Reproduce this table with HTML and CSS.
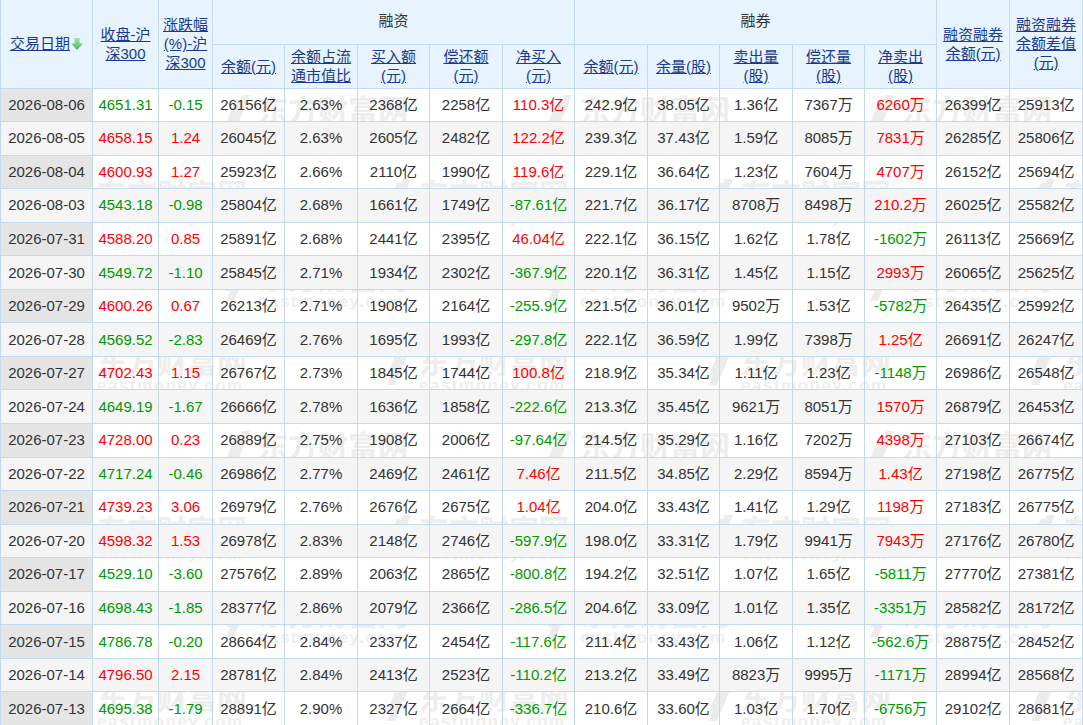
FILE: index.html
```html
<!DOCTYPE html>
<html lang="zh-CN">
<head>
<meta charset="utf-8">
<title>融资融券</title>
<link rel="stylesheet" href="styles.css">
</head>
<body>
<div class="wrap">
  <div class="wm" aria-hidden="true">
    <div class="wm-row a">
      <div class="wm-tile"><svg class="wm-logo" viewBox="0 0 30 44"><path d="M20 2 L28 2 L12 40 L4 40 Z M14 6 L19 6 L9 30 L4 30 Z"/></svg><div class="wm-txt"><span class="wm-cn">东方财富网</span><span class="wm-en">eastmoney.com</span></div></div>
      <div class="wm-tile"><svg class="wm-logo" viewBox="0 0 30 44"><path d="M20 2 L28 2 L12 40 L4 40 Z M14 6 L19 6 L9 30 L4 30 Z"/></svg><div class="wm-txt"><span class="wm-cn">东方财富网</span><span class="wm-en">eastmoney.com</span></div></div>
      <div class="wm-tile"><svg class="wm-logo" viewBox="0 0 30 44"><path d="M20 2 L28 2 L12 40 L4 40 Z M14 6 L19 6 L9 30 L4 30 Z"/></svg><div class="wm-txt"><span class="wm-cn">东方财富网</span><span class="wm-en">eastmoney.com</span></div></div>
      <div class="wm-tile"><svg class="wm-logo" viewBox="0 0 30 44"><path d="M20 2 L28 2 L12 40 L4 40 Z M14 6 L19 6 L9 30 L4 30 Z"/></svg><div class="wm-txt"><span class="wm-cn">东方财富网</span><span class="wm-en">eastmoney.com</span></div></div>
    </div>
    <div class="wm-row b">
      <div class="wm-tile"><svg class="wm-logo" viewBox="0 0 30 44"><path d="M20 2 L28 2 L12 40 L4 40 Z M14 6 L19 6 L9 30 L4 30 Z"/></svg><div class="wm-txt"><span class="wm-cn">东方财富网</span><span class="wm-en">eastmoney.com</span></div></div>
      <div class="wm-tile"><svg class="wm-logo" viewBox="0 0 30 44"><path d="M20 2 L28 2 L12 40 L4 40 Z M14 6 L19 6 L9 30 L4 30 Z"/></svg><div class="wm-txt"><span class="wm-cn">东方财富网</span><span class="wm-en">eastmoney.com</span></div></div>
      <div class="wm-tile"><svg class="wm-logo" viewBox="0 0 30 44"><path d="M20 2 L28 2 L12 40 L4 40 Z M14 6 L19 6 L9 30 L4 30 Z"/></svg><div class="wm-txt"><span class="wm-cn">东方财富网</span><span class="wm-en">eastmoney.com</span></div></div>
      <div class="wm-tile"><svg class="wm-logo" viewBox="0 0 30 44"><path d="M20 2 L28 2 L12 40 L4 40 Z M14 6 L19 6 L9 30 L4 30 Z"/></svg><div class="wm-txt"><span class="wm-cn">东方财富网</span><span class="wm-en">eastmoney.com</span></div></div>
    </div>
    <div class="wm-row a">
      <div class="wm-tile"><svg class="wm-logo" viewBox="0 0 30 44"><path d="M20 2 L28 2 L12 40 L4 40 Z M14 6 L19 6 L9 30 L4 30 Z"/></svg><div class="wm-txt"><span class="wm-cn">东方财富网</span><span class="wm-en">eastmoney.com</span></div></div>
      <div class="wm-tile"><svg class="wm-logo" viewBox="0 0 30 44"><path d="M20 2 L28 2 L12 40 L4 40 Z M14 6 L19 6 L9 30 L4 30 Z"/></svg><div class="wm-txt"><span class="wm-cn">东方财富网</span><span class="wm-en">eastmoney.com</span></div></div>
      <div class="wm-tile"><svg class="wm-logo" viewBox="0 0 30 44"><path d="M20 2 L28 2 L12 40 L4 40 Z M14 6 L19 6 L9 30 L4 30 Z"/></svg><div class="wm-txt"><span class="wm-cn">东方财富网</span><span class="wm-en">eastmoney.com</span></div></div>
      <div class="wm-tile"><svg class="wm-logo" viewBox="0 0 30 44"><path d="M20 2 L28 2 L12 40 L4 40 Z M14 6 L19 6 L9 30 L4 30 Z"/></svg><div class="wm-txt"><span class="wm-cn">东方财富网</span><span class="wm-en">eastmoney.com</span></div></div>
    </div>
    <div class="wm-row b">
      <div class="wm-tile"><svg class="wm-logo" viewBox="0 0 30 44"><path d="M20 2 L28 2 L12 40 L4 40 Z M14 6 L19 6 L9 30 L4 30 Z"/></svg><div class="wm-txt"><span class="wm-cn">东方财富网</span><span class="wm-en">eastmoney.com</span></div></div>
      <div class="wm-tile"><svg class="wm-logo" viewBox="0 0 30 44"><path d="M20 2 L28 2 L12 40 L4 40 Z M14 6 L19 6 L9 30 L4 30 Z"/></svg><div class="wm-txt"><span class="wm-cn">东方财富网</span><span class="wm-en">eastmoney.com</span></div></div>
      <div class="wm-tile"><svg class="wm-logo" viewBox="0 0 30 44"><path d="M20 2 L28 2 L12 40 L4 40 Z M14 6 L19 6 L9 30 L4 30 Z"/></svg><div class="wm-txt"><span class="wm-cn">东方财富网</span><span class="wm-en">eastmoney.com</span></div></div>
      <div class="wm-tile"><svg class="wm-logo" viewBox="0 0 30 44"><path d="M20 2 L28 2 L12 40 L4 40 Z M14 6 L19 6 L9 30 L4 30 Z"/></svg><div class="wm-txt"><span class="wm-cn">东方财富网</span><span class="wm-en">eastmoney.com</span></div></div>
    </div>
    <div class="wm-row a">
      <div class="wm-tile"><svg class="wm-logo" viewBox="0 0 30 44"><path d="M20 2 L28 2 L12 40 L4 40 Z M14 6 L19 6 L9 30 L4 30 Z"/></svg><div class="wm-txt"><span class="wm-cn">东方财富网</span><span class="wm-en">eastmoney.com</span></div></div>
      <div class="wm-tile"><svg class="wm-logo" viewBox="0 0 30 44"><path d="M20 2 L28 2 L12 40 L4 40 Z M14 6 L19 6 L9 30 L4 30 Z"/></svg><div class="wm-txt"><span class="wm-cn">东方财富网</span><span class="wm-en">eastmoney.com</span></div></div>
      <div class="wm-tile"><svg class="wm-logo" viewBox="0 0 30 44"><path d="M20 2 L28 2 L12 40 L4 40 Z M14 6 L19 6 L9 30 L4 30 Z"/></svg><div class="wm-txt"><span class="wm-cn">东方财富网</span><span class="wm-en">eastmoney.com</span></div></div>
      <div class="wm-tile"><svg class="wm-logo" viewBox="0 0 30 44"><path d="M20 2 L28 2 L12 40 L4 40 Z M14 6 L19 6 L9 30 L4 30 Z"/></svg><div class="wm-txt"><span class="wm-cn">东方财富网</span><span class="wm-en">eastmoney.com</span></div></div>
    </div>
    <div class="wm-row b">
      <div class="wm-tile"><svg class="wm-logo" viewBox="0 0 30 44"><path d="M20 2 L28 2 L12 40 L4 40 Z M14 6 L19 6 L9 30 L4 30 Z"/></svg><div class="wm-txt"><span class="wm-cn">东方财富网</span><span class="wm-en">eastmoney.com</span></div></div>
      <div class="wm-tile"><svg class="wm-logo" viewBox="0 0 30 44"><path d="M20 2 L28 2 L12 40 L4 40 Z M14 6 L19 6 L9 30 L4 30 Z"/></svg><div class="wm-txt"><span class="wm-cn">东方财富网</span><span class="wm-en">eastmoney.com</span></div></div>
      <div class="wm-tile"><svg class="wm-logo" viewBox="0 0 30 44"><path d="M20 2 L28 2 L12 40 L4 40 Z M14 6 L19 6 L9 30 L4 30 Z"/></svg><div class="wm-txt"><span class="wm-cn">东方财富网</span><span class="wm-en">eastmoney.com</span></div></div>
      <div class="wm-tile"><svg class="wm-logo" viewBox="0 0 30 44"><path d="M20 2 L28 2 L12 40 L4 40 Z M14 6 L19 6 L9 30 L4 30 Z"/></svg><div class="wm-txt"><span class="wm-cn">东方财富网</span><span class="wm-en">eastmoney.com</span></div></div>
    </div>
    <div class="wm-row a">
      <div class="wm-tile"><svg class="wm-logo" viewBox="0 0 30 44"><path d="M20 2 L28 2 L12 40 L4 40 Z M14 6 L19 6 L9 30 L4 30 Z"/></svg><div class="wm-txt"><span class="wm-cn">东方财富网</span><span class="wm-en">eastmoney.com</span></div></div>
      <div class="wm-tile"><svg class="wm-logo" viewBox="0 0 30 44"><path d="M20 2 L28 2 L12 40 L4 40 Z M14 6 L19 6 L9 30 L4 30 Z"/></svg><div class="wm-txt"><span class="wm-cn">东方财富网</span><span class="wm-en">eastmoney.com</span></div></div>
      <div class="wm-tile"><svg class="wm-logo" viewBox="0 0 30 44"><path d="M20 2 L28 2 L12 40 L4 40 Z M14 6 L19 6 L9 30 L4 30 Z"/></svg><div class="wm-txt"><span class="wm-cn">东方财富网</span><span class="wm-en">eastmoney.com</span></div></div>
      <div class="wm-tile"><svg class="wm-logo" viewBox="0 0 30 44"><path d="M20 2 L28 2 L12 40 L4 40 Z M14 6 L19 6 L9 30 L4 30 Z"/></svg><div class="wm-txt"><span class="wm-cn">东方财富网</span><span class="wm-en">eastmoney.com</span></div></div>
    </div>
    <div class="wm-row b">
      <div class="wm-tile"><svg class="wm-logo" viewBox="0 0 30 44"><path d="M20 2 L28 2 L12 40 L4 40 Z M14 6 L19 6 L9 30 L4 30 Z"/></svg><div class="wm-txt"><span class="wm-cn">东方财富网</span><span class="wm-en">eastmoney.com</span></div></div>
      <div class="wm-tile"><svg class="wm-logo" viewBox="0 0 30 44"><path d="M20 2 L28 2 L12 40 L4 40 Z M14 6 L19 6 L9 30 L4 30 Z"/></svg><div class="wm-txt"><span class="wm-cn">东方财富网</span><span class="wm-en">eastmoney.com</span></div></div>
      <div class="wm-tile"><svg class="wm-logo" viewBox="0 0 30 44"><path d="M20 2 L28 2 L12 40 L4 40 Z M14 6 L19 6 L9 30 L4 30 Z"/></svg><div class="wm-txt"><span class="wm-cn">东方财富网</span><span class="wm-en">eastmoney.com</span></div></div>
      <div class="wm-tile"><svg class="wm-logo" viewBox="0 0 30 44"><path d="M20 2 L28 2 L12 40 L4 40 Z M14 6 L19 6 L9 30 L4 30 Z"/></svg><div class="wm-txt"><span class="wm-cn">东方财富网</span><span class="wm-en">eastmoney.com</span></div></div>
    </div>
  </div>

  <table class="grid">
    <colgroup>
      <col class="c-date"><col class="c-close"><col class="c-chg">
      <col class="c-72"><col class="c-73"><col class="c-72"><col class="c-73"><col class="c-72">
      <col class="c-73"><col class="c-72"><col class="c-73"><col class="c-72"><col class="c-72">
      <col class="c-73"><col class="c-73">
    </colgroup>
    <thead>
      <tr class="h1">
        <th rowspan="2"><a href="#">交易日期</a><svg class="sort" viewBox="0 0 12 12" width="12" height="12"><defs><linearGradient id="ag" x1="0" y1="0" x2="0" y2="1"><stop offset="0" stop-color="#a6e0a6"/><stop offset="1" stop-color="#4db84d"/></linearGradient></defs><path d="M3.5 0h5v5.5H12L6 12 0 5.5h3.5z" fill="url(#ag)"/></svg></th>
        <th rowspan="2"><a href="#">收盘-沪深300</a></th>
        <th rowspan="2"><a href="#">涨跌幅(%)-沪深300</a></th>
        <th colspan="5" class="grp">融资</th>
        <th colspan="5" class="grp">融券</th>
        <th rowspan="2"><a href="#">融资融券余额(元)</a></th>
        <th rowspan="2"><a href="#">融资融券余额差值(元)</a></th>
      </tr>
      <tr class="h2">
        <th><a href="#">余额(元)</a></th>
        <th><a href="#">余额占流通市值比</a></th>
        <th><a href="#">买入额(元)</a></th>
        <th><a href="#">偿还额(元)</a></th>
        <th><a href="#">净买入(元)</a></th>
        <th><a href="#">余额(元)</a></th>
        <th><a href="#">余量(股)</a></th>
        <th><a href="#">卖出量(股)</a></th>
        <th><a href="#">偿还量(股)</a></th>
        <th><a href="#">净卖出(股)</a></th>
      </tr>
    </thead>
    <tbody>
      <tr><td class="d">2026-08-06</td><td class="g">4651.31</td><td class="g">-0.15</td><td>26156亿</td><td>2.63%</td><td>2368亿</td><td>2258亿</td><td class="r">110.3亿</td><td>242.9亿</td><td>38.05亿</td><td>1.36亿</td><td>7367万</td><td class="r">6260万</td><td>26399亿</td><td>25913亿</td></tr>
      <tr><td class="d">2026-08-05</td><td class="r">4658.15</td><td class="r">1.24</td><td>26045亿</td><td>2.63%</td><td>2605亿</td><td>2482亿</td><td class="r">122.2亿</td><td>239.3亿</td><td>37.43亿</td><td>1.59亿</td><td>8085万</td><td class="r">7831万</td><td>26285亿</td><td>25806亿</td></tr>
      <tr><td class="d">2026-08-04</td><td class="r">4600.93</td><td class="r">1.27</td><td>25923亿</td><td>2.66%</td><td>2110亿</td><td>1990亿</td><td class="r">119.6亿</td><td>229.1亿</td><td>36.64亿</td><td>1.23亿</td><td>7604万</td><td class="r">4707万</td><td>26152亿</td><td>25694亿</td></tr>
      <tr><td class="d">2026-08-03</td><td class="g">4543.18</td><td class="g">-0.98</td><td>25804亿</td><td>2.68%</td><td>1661亿</td><td>1749亿</td><td class="g">-87.61亿</td><td>221.7亿</td><td>36.17亿</td><td>8708万</td><td>8498万</td><td class="r">210.2万</td><td>26025亿</td><td>25582亿</td></tr>
      <tr><td class="d">2026-07-31</td><td class="r">4588.20</td><td class="r">0.85</td><td>25891亿</td><td>2.68%</td><td>2441亿</td><td>2395亿</td><td class="r">46.04亿</td><td>222.1亿</td><td>36.15亿</td><td>1.62亿</td><td>1.78亿</td><td class="g">-1602万</td><td>26113亿</td><td>25669亿</td></tr>
      <tr><td class="d">2026-07-30</td><td class="g">4549.72</td><td class="g">-1.10</td><td>25845亿</td><td>2.71%</td><td>1934亿</td><td>2302亿</td><td class="g">-367.9亿</td><td>220.1亿</td><td>36.31亿</td><td>1.45亿</td><td>1.15亿</td><td class="r">2993万</td><td>26065亿</td><td>25625亿</td></tr>
      <tr><td class="d">2026-07-29</td><td class="r">4600.26</td><td class="r">0.67</td><td>26213亿</td><td>2.71%</td><td>1908亿</td><td>2164亿</td><td class="g">-255.9亿</td><td>221.5亿</td><td>36.01亿</td><td>9502万</td><td>1.53亿</td><td class="g">-5782万</td><td>26435亿</td><td>25992亿</td></tr>
      <tr><td class="d">2026-07-28</td><td class="g">4569.52</td><td class="g">-2.83</td><td>26469亿</td><td>2.76%</td><td>1695亿</td><td>1993亿</td><td class="g">-297.8亿</td><td>222.1亿</td><td>36.59亿</td><td>1.99亿</td><td>7398万</td><td class="r">1.25亿</td><td>26691亿</td><td>26247亿</td></tr>
      <tr><td class="d">2026-07-27</td><td class="r">4702.43</td><td class="r">1.15</td><td>26767亿</td><td>2.73%</td><td>1845亿</td><td>1744亿</td><td class="r">100.8亿</td><td>218.9亿</td><td>35.34亿</td><td>1.11亿</td><td>1.23亿</td><td class="g">-1148万</td><td>26986亿</td><td>26548亿</td></tr>
      <tr><td class="d">2026-07-24</td><td class="g">4649.19</td><td class="g">-1.67</td><td>26666亿</td><td>2.78%</td><td>1636亿</td><td>1858亿</td><td class="g">-222.6亿</td><td>213.3亿</td><td>35.45亿</td><td>9621万</td><td>8051万</td><td class="r">1570万</td><td>26879亿</td><td>26453亿</td></tr>
      <tr><td class="d">2026-07-23</td><td class="r">4728.00</td><td class="r">0.23</td><td>26889亿</td><td>2.75%</td><td>1908亿</td><td>2006亿</td><td class="g">-97.64亿</td><td>214.5亿</td><td>35.29亿</td><td>1.16亿</td><td>7202万</td><td class="r">4398万</td><td>27103亿</td><td>26674亿</td></tr>
      <tr><td class="d">2026-07-22</td><td class="g">4717.24</td><td class="g">-0.46</td><td>26986亿</td><td>2.77%</td><td>2469亿</td><td>2461亿</td><td class="r">7.46亿</td><td>211.5亿</td><td>34.85亿</td><td>2.29亿</td><td>8594万</td><td class="r">1.43亿</td><td>27198亿</td><td>26775亿</td></tr>
      <tr><td class="d">2026-07-21</td><td class="r">4739.23</td><td class="r">3.06</td><td>26979亿</td><td>2.76%</td><td>2676亿</td><td>2675亿</td><td class="r">1.04亿</td><td>204.0亿</td><td>33.43亿</td><td>1.41亿</td><td>1.29亿</td><td class="r">1198万</td><td>27183亿</td><td>26775亿</td></tr>
      <tr><td class="d">2026-07-20</td><td class="r">4598.32</td><td class="r">1.53</td><td>26978亿</td><td>2.83%</td><td>2148亿</td><td>2746亿</td><td class="g">-597.9亿</td><td>198.0亿</td><td>33.31亿</td><td>1.79亿</td><td>9941万</td><td class="r">7943万</td><td>27176亿</td><td>26780亿</td></tr>
      <tr><td class="d">2026-07-17</td><td class="g">4529.10</td><td class="g">-3.60</td><td>27576亿</td><td>2.89%</td><td>2063亿</td><td>2865亿</td><td class="g">-800.8亿</td><td>194.2亿</td><td>32.51亿</td><td>1.07亿</td><td>1.65亿</td><td class="g">-5811万</td><td>27770亿</td><td>27381亿</td></tr>
      <tr><td class="d">2026-07-16</td><td class="g">4698.43</td><td class="g">-1.85</td><td>28377亿</td><td>2.86%</td><td>2079亿</td><td>2366亿</td><td class="g">-286.5亿</td><td>204.6亿</td><td>33.09亿</td><td>1.01亿</td><td>1.35亿</td><td class="g">-3351万</td><td>28582亿</td><td>28172亿</td></tr>
      <tr><td class="d">2026-07-15</td><td class="g">4786.78</td><td class="g">-0.20</td><td>28664亿</td><td>2.84%</td><td>2337亿</td><td>2454亿</td><td class="g">-117.6亿</td><td>211.4亿</td><td>33.43亿</td><td>1.06亿</td><td>1.12亿</td><td class="g">-562.6万</td><td>28875亿</td><td>28452亿</td></tr>
      <tr><td class="d">2026-07-14</td><td class="r">4796.50</td><td class="r">2.15</td><td>28781亿</td><td>2.84%</td><td>2413亿</td><td>2523亿</td><td class="g">-110.2亿</td><td>213.2亿</td><td>33.49亿</td><td>8823万</td><td>9995万</td><td class="g">-1171万</td><td>28994亿</td><td>28568亿</td></tr>
      <tr><td class="d">2026-07-13</td><td class="g">4695.38</td><td class="g">-1.79</td><td>28891亿</td><td>2.90%</td><td>2327亿</td><td>2664亿</td><td class="g">-336.7亿</td><td>210.6亿</td><td>33.60亿</td><td>1.03亿</td><td>1.70亿</td><td class="g">-6756万</td><td>29102亿</td><td>28681亿</td></tr>
    </tbody>
  </table>
</div>
</body>
</html>
```

FILE: styles.css
```css
html, body {
  margin: 0;
  padding: 0;
  background: #ffffff;
}

body {
  font-family: "Liberation Sans", "Noto Sans CJK SC", sans-serif;
  font-size: 15px;
  color: #333333;
}

.wrap {
  position: relative;
  width: 1082px;
}

/* faint background watermark, visible through the white rows */
.wm {
  position: absolute;
  inset: 0;
  overflow: hidden;
  padding-top: 93px;
  z-index: 0;
  pointer-events: none;
}

.wm-row {
  display: flex;
  height: 84px;
}

.wm-row.a {
  margin-left: -100px;
}

.wm-row.b {
  margin-left: 61px;
}

.wm-tile {
  flex: 0 0 322px;
  display: flex;
  gap: 6px;
  align-items: flex-start;
}

.wm-logo {
  width: 30px;
  height: 44px;
  fill: #ececec;
  flex: 0 0 auto;
}

.wm-txt {
  display: flex;
  flex-direction: column;
}

.wm-cn {
  font-family: "Noto Sans CJK SC", sans-serif;
  font-size: 30px;
  line-height: 31px;
  font-weight: 700;
  color: #eeeeee;
}

.wm-en {
  font-family: "Liberation Sans", sans-serif;
  font-size: 17px;
  line-height: 15px;
  font-weight: 700;
  letter-spacing: 1.5px;
  color: #efefef;
  margin-top: 2px;
}

/* table */
.grid {
  position: relative;
  z-index: 1;
  border-collapse: collapse;
  table-layout: fixed;
  width: 1082px;
}

.c-date { width: 92px; }
.c-close { width: 66px; }
.c-chg { width: 54px; }
.c-72 { width: 72px; }
.c-73 { width: 73px; }

.grid th,
.grid td {
  border: 1px solid #c3d9ed;
  text-align: center;
  vertical-align: middle;
  padding: 0 3px;
  white-space: normal;
}

.grid thead tr.h1 th {
  border-top: 0;
}

.grid thead th {
  background: #e7f3fd;
  font-weight: normal;
  line-height: 19px;
  color: #333333;
}

.grid thead tr.h1 {
  height: 44px;
}

.grid thead tr.h2 {
  height: 44px;
}

.grid thead th.grp {
  padding-bottom: 2px;
}

.grid a {
  color: #1b3c8e;
  text-decoration: underline;
}

.sort {
  width: 12px;
  height: 12px;
  vertical-align: -1px;
  margin-left: 1px;
}

.grid tbody tr {
  height: 33.55px;
}

.grid tbody td {
  line-height: 18px;
  white-space: nowrap;
}

.grid tbody tr:nth-child(even) td {
  background: #f5f5f5;
}

.grid tbody td.d {
  background: #e5e5e5;
}

.grid td.r {
  color: #ff0000;
}

.grid td.g {
  color: #009900;
}
```
